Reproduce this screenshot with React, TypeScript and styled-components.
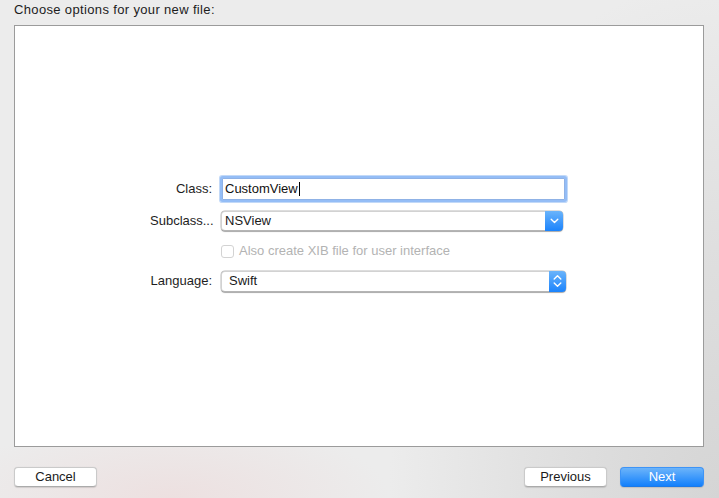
import React from "react";
import styled, { createGlobalStyle } from "styled-components";

const Global = createGlobalStyle`
  html, body { margin: 0; padding: 0; }
  body { font-family: "Liberation Sans", Arial, sans-serif; font-size: 13px; color: #1e1e1e; }
  * { box-sizing: border-box; }
`;

const Window = styled.div`
  width: 719px;
  height: 498px;
  display: flex;
  flex-direction: column;
  padding: 2px 15px 0 14px;
  background:
    radial-gradient(ellipse 220px 80px at 170px 100%, rgba(237, 222, 222, 0.85), rgba(237, 222, 222, 0) 100%),
    radial-gradient(ellipse 330px 520px at 100% 100%, #d5d5d5 0%, rgba(213, 213, 213, 0.6) 45%, rgba(213, 213, 213, 0) 100%),
    #ececec;
  overflow: hidden;
`;

const Title = styled.div`
  font-size: 13px;
  letter-spacing: 0.35px;
  line-height: 16px;
  height: 16px;
  color: #1c1c1c;
  margin-bottom: 7px;
`;

const Panel = styled.div`
  height: 422px;
  background: #ffffff;
  border: 1px solid #9b9b9b;
  display: flex;
  align-items: center;
  justify-content: center;
  padding: 0 0 3px 0;
`;

const Form = styled.div`
  display: flex;
  flex-direction: column;
  width: 418px;
`;

const Row = styled.div<{ $mt?: number; $h: number }>`
  display: flex;
  align-items: center;
  gap: 8px;
  height: ${(p) => p.$h}px;
  margin-top: ${(p) => p.$mt ?? 0}px;
`;

const Label = styled.div`
  width: 62px;
  text-align: right;
  white-space: nowrap;
  color: #1e1e1e;
  line-height: 16px;
`;

const TextField = styled.div`
  margin-left: 2px;
  width: 343px;
  height: 22px;
  border: 1px solid #8fb2e6;
  border-radius: 1px;
  box-shadow: 0 0 0 2px #94bdf6, 0 0 0 3px rgba(120, 170, 240, 0.45);
  background: #fff;
  display: flex;
  align-items: center;
  padding-left: 2px;
  line-height: 16px;
  color: #111;
`;

const Caret = styled.span`
  display: inline-block;
  width: 1px;
  height: 14px;
  background: #000;
  margin-left: 1px;
`;

const Popup = styled.div<{ $w: number }>`
  margin-left: 1px;
  width: ${(p) => p.$w}px;
  height: 100%;
  display: flex;
  align-items: stretch;
  border-radius: 4px;
  background: #fff;
  box-shadow: 0 0 0 0.5px rgba(0, 0, 0, 0.22), 0 0.5px 1px rgba(0, 0, 0, 0.25);
  border: 1px solid #d2d2d2;
  border-bottom-color: #b5b5b5;
`;

const PopupText = styled.div<{ $pl: number }>`
  flex: 1;
  display: flex;
  align-items: center;
  padding-left: ${(p) => p.$pl}px;
  line-height: 16px;
  color: #1a1a1a;
`;

const PopupArrow = styled.div<{ $w: number }>`
  width: ${(p) => p.$w}px;
  margin: -1px -1px -1px 0;
  border-radius: 0 4px 4px 0;
  background: linear-gradient(#6ab4fb, #1b83fc);
  display: flex;
  align-items: center;
  justify-content: center;
`;

const CheckRow = styled.div`
  display: flex;
  align-items: center;
  margin-left: 71px;
  margin-top: 14px;
  height: 13px;
  gap: 5px;
`;

const CheckBox = styled.div`
  width: 13px;
  height: 13px;
  border: 1px solid #d3d3d3;
  border-radius: 3px;
  background: #fff;
`;

const CheckLabel = styled.div`
  color: #b3b3b3;
  line-height: 16px;
`;

const Footer = styled.div`
  flex: 1;
  display: flex;
  align-items: flex-start;
  padding-top: 20px;
  gap: 13px;
`;

const Spacer = styled.div`
  flex: 1;
`;

const Button = styled.button<{ $w: number; $primary?: boolean }>`
  width: ${(p) => p.$w}px;
  height: 20px;
  border-radius: 4px;
  font-family: "Liberation Sans", Arial, sans-serif;
  font-size: 13px;
  line-height: 16px;
  padding: 0;
  cursor: default;
  color: ${(p) => (p.$primary ? "#ffffff" : "#1a1a1a")};
  background: ${(p) => (p.$primary ? "linear-gradient(#6cb4fa, #1380fc)" : "#ffffff")};
  border: ${(p) => (p.$primary ? "1px solid #3e94f6" : "1px solid #cacaca")};
  border-bottom-color: ${(p) => (p.$primary ? "#1d79e6" : "#ababab")};
  box-shadow: 0 0.5px 1px rgba(0, 0, 0, 0.12);
`;

const ChevronDown = () => (
  <svg width="9" height="6" viewBox="0 0 9 6">
    <path d="M1.2 1.3 L4.5 4.4 L7.8 1.3" fill="none" stroke="#fff" strokeWidth="1.4" strokeLinecap="round" strokeLinejoin="round" />
  </svg>
);

const ChevronUpDown = () => (
  <svg width="9" height="14" viewBox="0 0 9 14">
    <path d="M1.2 5 L4.5 1.8 L7.8 5" fill="none" stroke="#fff" strokeWidth="1.4" strokeLinecap="round" strokeLinejoin="round" />
    <path d="M1.2 9 L4.5 12.2 L7.8 9" fill="none" stroke="#fff" strokeWidth="1.4" strokeLinecap="round" strokeLinejoin="round" />
  </svg>
);

export default function App() {
  return (
    <>
      <Global />
      <Window>
        <Title>Choose options for your new file:</Title>
        <Panel>
          <Form>
            <Row $h={22}>
              <Label>Class:</Label>
              <TextField>
                CustomView
                <Caret />
              </TextField>
            </Row>
            <Row $h={20} $mt={11}>
              <Label>Subclass...</Label>
              <Popup $w={342}>
                <PopupText $pl={3}>NSView</PopupText>
                <PopupArrow $w={18}>
                  <ChevronDown />
                </PopupArrow>
              </Popup>
            </Row>
            <CheckRow>
              <CheckBox />
              <CheckLabel>Also create XIB file for user interface</CheckLabel>
            </CheckRow>
            <Row $h={21} $mt={13}>
              <Label>Language:</Label>
              <Popup $w={345}>
                <PopupText $pl={7}>Swift</PopupText>
                <PopupArrow $w={17}>
                  <ChevronUpDown />
                </PopupArrow>
              </Popup>
            </Row>
          </Form>
        </Panel>
        <Footer>
          <Button $w={83}>Cancel</Button>
          <Spacer />
          <Button $w={83}>Previous</Button>
          <Button $w={84} $primary>
            Next
          </Button>
        </Footer>
      </Window>
    </>
  );
}
